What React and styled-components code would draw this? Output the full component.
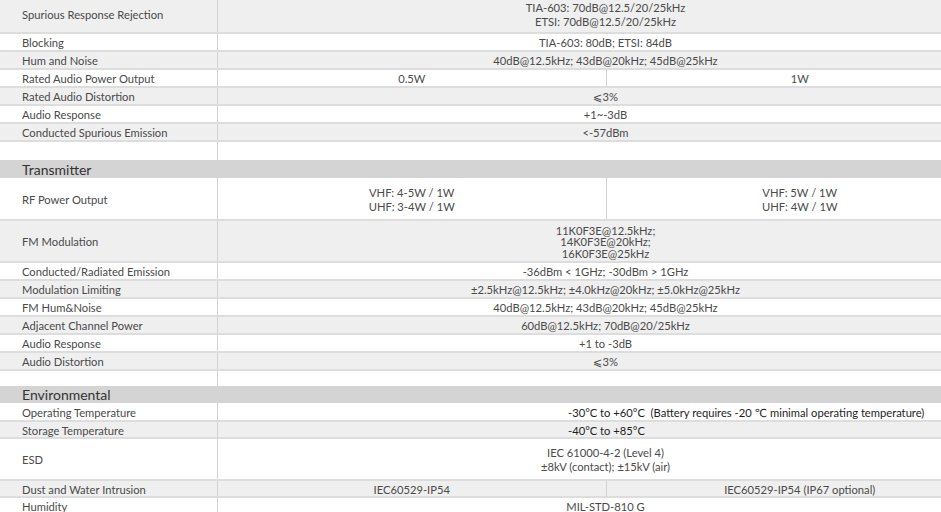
import React from 'react';
import styled, { createGlobalStyle } from 'styled-components';

const GlobalStyle = createGlobalStyle`
  html, body {
    margin: 0;
    padding: 0;
    background: #ffffff;
    overflow: hidden;
  }
  body {
    font-family: Lato, "Open Sans", "Liberation Sans", "DejaVu Sans", sans-serif;
    color: #4a4a4a;
  }
`;

const Sheet = styled.div`
  width: 993px;
  display: flex;
  flex-direction: column;
`;

/* the table continues above the visible area, so the first row is partly cut */
const Row = styled.div`
  display: grid;
  grid-template-columns: 218px 1fr;
  height: ${p => p.$h}px;
  margin-top: ${p => (p.$cut ? `-${p.$cut}px` : '0')};
  background: ${p => (p.$gray ? '#efefef' : '#ffffff')};
  border-bottom: ${p => (p.$line ? '2px solid #dddddd' : 'none')};
  font-size: 11.2px;
  line-height: 14px;
`;

const Label = styled.div`
  display: flex;
  align-items: center;
  padding: 2px 0 0 22px;
  border-right: 1px solid #d2d2d2;
  white-space: nowrap;
`;

const Value = styled.div`
  display: flex;
  flex-direction: column;
  align-items: ${p => (p.$left ? 'flex-start' : 'center')};
  justify-content: center;
  padding: 2px 0 0 ${p => (p.$left ? '350px' : '0')};
  color: ${p => (p.$dark ? '#1e1e1e' : 'inherit')};
  line-height: ${p => (p.$tight ? '11.5px' : '14px')};
  white-space: pre;
`;

const Split = styled.div`
  display: grid;
  grid-template-columns: 1fr 1fr;
`;

const Half = styled.div`
  display: flex;
  flex-direction: column;
  align-items: center;
  justify-content: center;
  padding-top: 2px;
  white-space: pre;
  & + & {
    border-left: 1px solid #d2d2d2;
  }
`;

const Header = styled.div`
  height: ${p => p.$h}px;
  background: #d4d4d4;
  display: flex;
  align-items: center;
  padding-left: 22px;
  font-size: 14px;
  color: #333333;
`;

const Lines = ({ text }) =>
  text.split('\n').map((t, i) => <span key={i}>{t}</span>);

const blocks = [
  { type: 'row', label: 'Spurious Response Rejection', value: 'TIA-603: 70dB@12.5/20/25kHz\nETSI: 70dB@12.5/20/25kHz', h: 37, cut: 5, gray: true },
  { type: 'row', label: 'Blocking', value: 'TIA-603: 80dB; ETSI: 84dB' },
  { type: 'row', label: 'Hum and Noise', value: '40dB@12.5kHz; 43dB@20kHz; 45dB@25kHz', gray: true },
  { type: 'row', label: 'Rated Audio Power Output', split: ['0.5W', '1W'] },
  { type: 'row', label: 'Rated Audio Distortion', value: '⩽3%', gray: true },
  { type: 'row', label: 'Audio Response', value: '+1~-3dB' },
  { type: 'row', label: 'Conducted Spurious Emission', value: '<-57dBm', gray: true },
  { type: 'row', label: '', value: '', h: 18, line: false },
  { type: 'head', label: 'Transmitter', h: 18 },
  { type: 'row', label: 'RF Power Output', split: ['VHF: 4-5W / 1W\nUHF: 3-4W / 1W', 'VHF: 5W / 1W\nUHF: 4W / 1W'], h: 41 },
  { type: 'row', label: 'FM Modulation', value: '11K0F3E@12.5kHz;\n14K0F3E@20kHz;\n16K0F3E@25kHz', h: 40, gray: true, tight: true },
  { type: 'row', label: 'Conducted/Radiated Emission', value: '-36dBm < 1GHz; -30dBm > 1GHz' },
  { type: 'row', label: 'Modulation Limiting', value: '±2.5kHz@12.5kHz; ±4.0kHz@20kHz; ±5.0kHz@25kHz', gray: true },
  { type: 'row', label: 'FM Hum&Noise', value: '40dB@12.5kHz; 43dB@20kHz; 45dB@25kHz' },
  { type: 'row', label: 'Adjacent Channel Power', value: '60dB@12.5kHz; 70dB@20/25kHz', gray: true },
  { type: 'row', label: 'Audio Response', value: '+1 to -3dB' },
  { type: 'row', label: 'Audio Distortion', value: '⩽3%', gray: true },
  { type: 'row', label: '', value: '', h: 15, line: false },
  { type: 'head', label: 'Environmental', h: 17 },
  { type: 'row', label: 'Operating Temperature', value: '-30°C to +60°C  (Battery requires -20 ℃ minimal operating temperature)', left: true, h: 17 },
  { type: 'row', label: 'Storage Temperature', value: '-40°C to +85°C', left: true, gray: true, h: 15 },
  { type: 'row', label: 'ESD', value: 'IEC 61000-4-2 (Level 4)\n±8kV (contact); ±15kV (air)', h: 40 },
  { type: 'row', label: 'Dust and Water Intrusion', split: ['IEC60529-IP54', 'IEC60529-IP54 (IP67 optional)'], gray: true, h: 15 },
  { type: 'row', label: 'Humidity', value: 'MIL-STD-810 G', h: 16 },
];

export default function App() {
  return (
    <>
      <GlobalStyle />
      <Sheet>
        {blocks.map((b, i) => {
          if (b.type === 'head') {
            return <Header key={i} $h={b.h}>{b.label}</Header>;
          }
          return (
            <Row key={i} $h={b.h || 16} $cut={b.cut} $gray={b.gray} $line={b.line !== false}>
              <Label>{b.label}</Label>
              {b.split ? (
                <Split>
                  <Half><Lines text={b.split[0]} /></Half>
                  <Half><Lines text={b.split[1]} /></Half>
                </Split>
              ) : (
                <Value $left={b.left} $dark={b.left} $tight={b.tight}>
                  <Lines text={b.value} />
                </Value>
              )}
            </Row>
          );
        })}
      </Sheet>
    </>
  );
}
